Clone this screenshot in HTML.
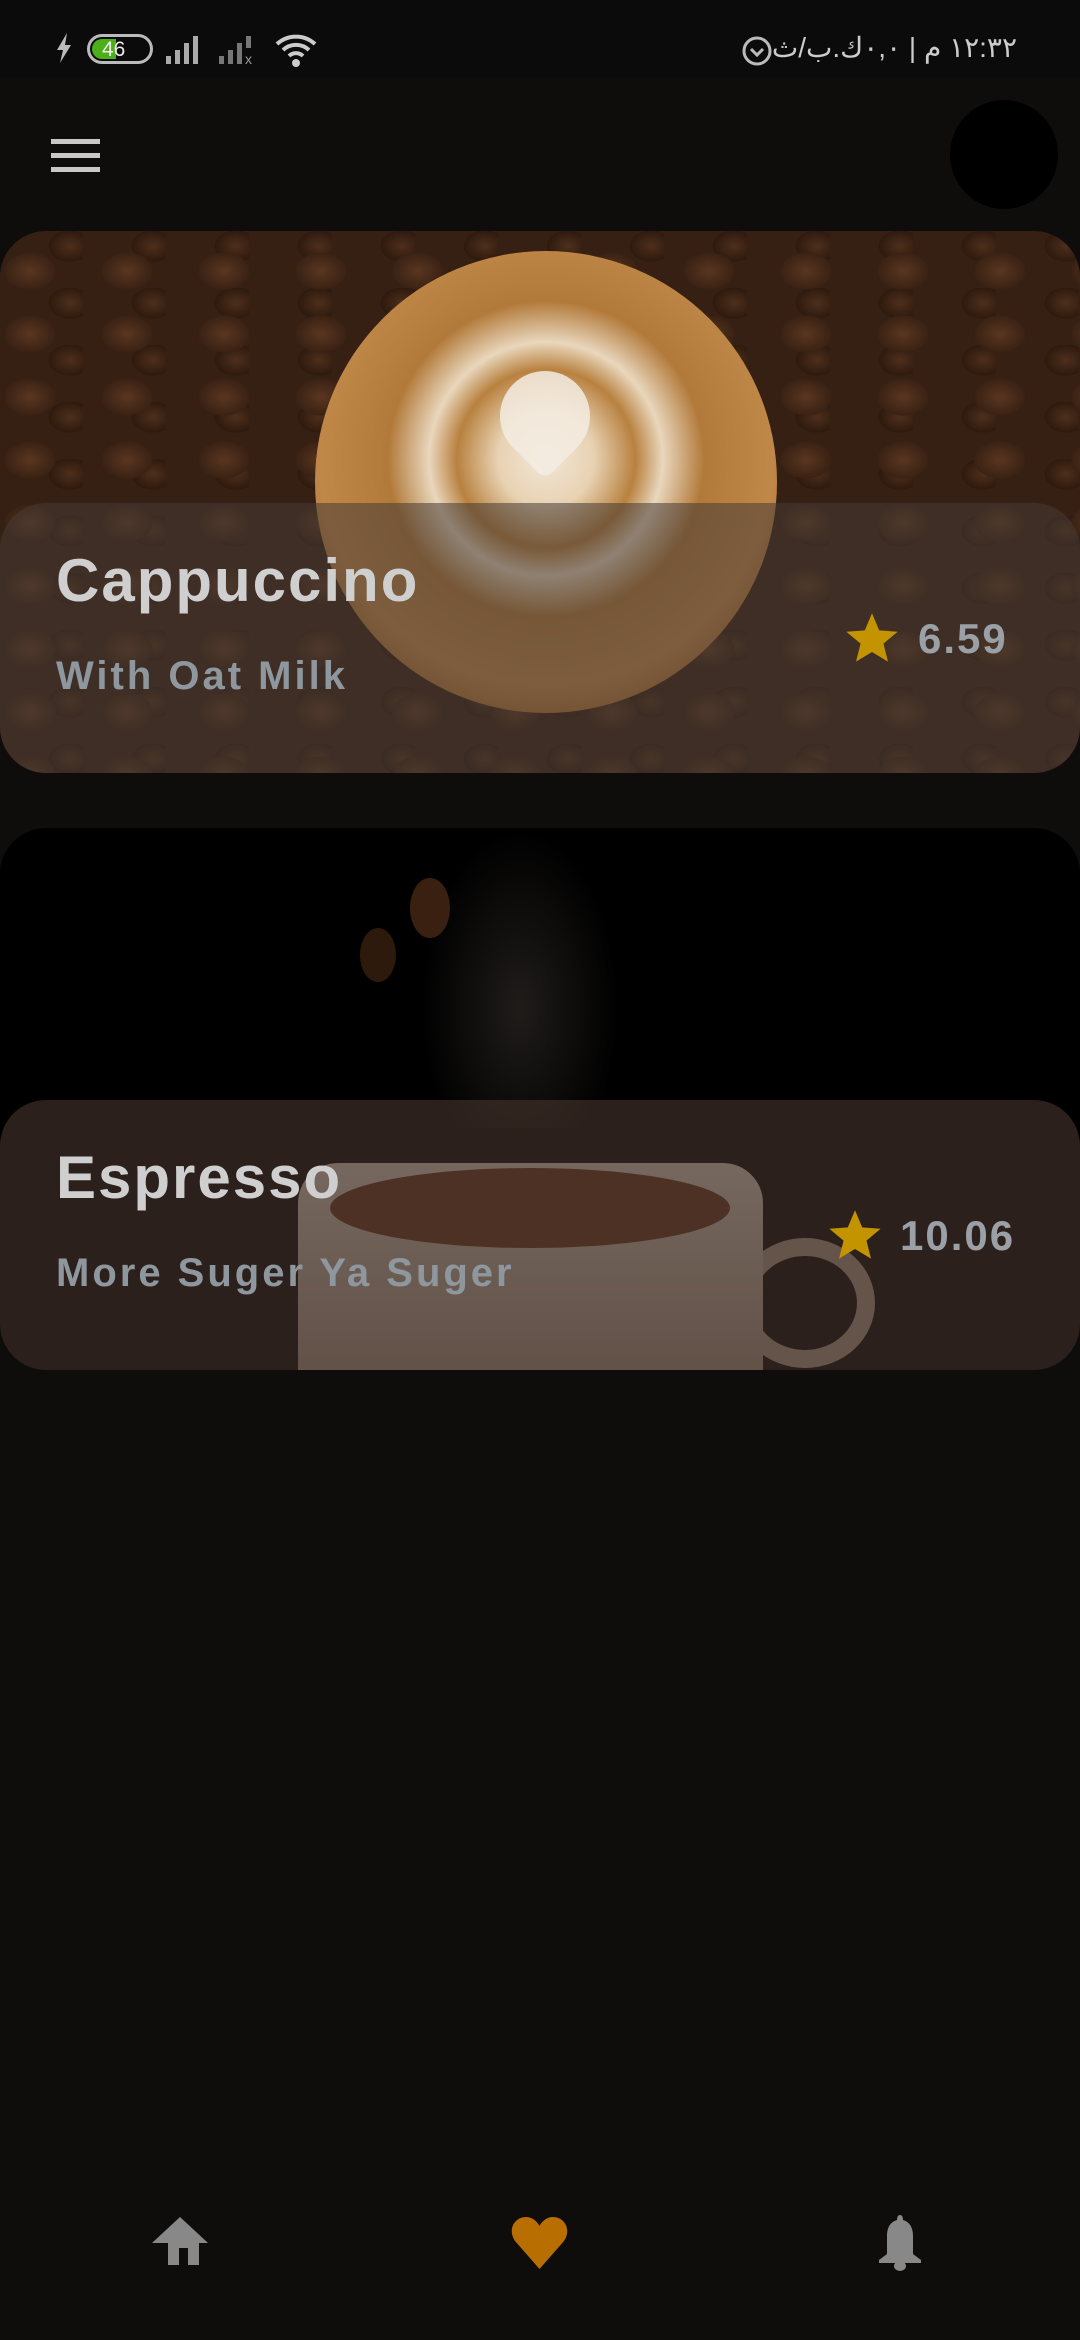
<!DOCTYPE html>
<html><head><meta charset="utf-8"><style>
*{margin:0;padding:0;box-sizing:border-box}
body{width:1080px;height:2340px;background:#0e0d0c;font-family:"Liberation Sans",sans-serif;position:relative;overflow:hidden}
.sb{position:absolute;left:0;top:0;width:1080px;height:79px;background:#0b0b0b}
.card{position:absolute;left:0;width:1080px;height:542px;border-radius:46px;overflow:hidden}
.c1{top:231px;background:
radial-gradient(ellipse 36px 26px at 30px 40px,#5a3620 0,#3a2214 70%,transparent 72%),
radial-gradient(ellipse 30px 22px at 70px 15px,#4e2f1c 0,#2e1a0e 70%,transparent 72%),
#352013;background-size:97px 63px,83px 57px,auto}
.cup{position:absolute;left:315px;top:20px;width:462px;height:462px;border-radius:50%;
background:radial-gradient(circle at 50% 45%,#f2e6d6 0,#e8d2b3 14%,#b8813f 26%,#e9d7bd 34%,#b27a3a 46%,#c08848 66%,#a4682c 80%,#efe8df 83%,#d8d0c8 100%)}
.heart{position:absolute;left:500px;top:140px;width:90px;height:90px;background:#f3ece2;border-radius:45px 45px 10px 45px;transform:rotate(45deg);opacity:.85}
.ov{position:absolute;left:0;top:272px;width:1080px;height:270px;border-radius:46px 46px 0 0}
.o1{background:rgba(70,58,52,.55)}
.c2{top:828px;background:#000}
.cup2{position:absolute;left:298px;top:335px;width:465px;height:230px;border-radius:40px 40px 0 0;background:linear-gradient(#c6bdb2,#8a7c70);}
.cup2in{position:absolute;left:330px;top:340px;width:400px;height:80px;border-radius:50%;background:#5a2e18}
.handle{position:absolute;left:735px;top:410px;width:140px;height:130px;border:18px solid #9a8a7c;border-radius:50%}
.o2{background:rgba(70,52,44,.62)}
.t{position:absolute;left:56px;color:#d0cfcf;font-size:60px;letter-spacing:2px;line-height:1;font-weight:bold}
.s{position:absolute;left:56px;color:#8e979e;font-size:40px;letter-spacing:3px;line-height:1;font-weight:bold}
.p{position:absolute;color:#9aa0a6;font-size:42px;letter-spacing:2px;line-height:1;font-weight:bold}
.star{position:absolute;width:56px;height:54px}
</style></head><body>
<div class="sb">
<svg style="position:absolute;left:55px;top:33px" width="18" height="30" viewBox="0 0 18 30"><path d="M12 0L2 17h6l-3 13 11-18h-6z" fill="#bbb"/></svg>
<div style="position:absolute;left:87px;top:34px;width:66px;height:30px;border:3px solid #bbb;border-radius:15px"><div style="position:absolute;left:2px;top:2px;width:24px;height:20px;background:#4caf1a;border-radius:10px 0 0 10px"></div><span style="position:absolute;left:12px;top:1px;color:#eee;font-size:21px">46</span></div>
<svg style="position:absolute;left:166px;top:34px" width="40" height="30"><rect x="0" y="22" width="5" height="8" fill="#aaa"/><rect x="9" y="16" width="5" height="14" fill="#aaa"/><rect x="18" y="9" width="5" height="21" fill="#aaa"/><rect x="27" y="2" width="5" height="28" fill="#aaa"/></svg>
<svg style="position:absolute;left:219px;top:34px" width="40" height="30"><rect x="0" y="22" width="5" height="8" fill="#777"/><rect x="9" y="16" width="5" height="14" fill="#777"/><rect x="18" y="9" width="5" height="21" fill="#777"/><rect x="27" y="2" width="5" height="12" fill="#777"/><text x="26" y="30" font-size="14" fill="#999">x</text></svg>
<svg style="position:absolute;left:274px;top:32px" width="46" height="36" viewBox="0 0 46 36"><path d="M3 12a28 28 0 0 1 38 0M9 18a19 19 0 0 1 26 0M15 24a10 10 0 0 1 14 0" stroke="#ccc" stroke-width="4" fill="none"/><circle cx="22" cy="31" r="4" fill="#ccc"/></svg>
<svg style="position:absolute;left:740px;top:33px" width="34" height="34" viewBox="0 0 34 34"><circle cx="17" cy="18" r="13" stroke="#bbb" stroke-width="3" fill="none"/><path d="M11 16l6 6 6-6" stroke="#bbb" stroke-width="3" fill="none"/></svg>
<div style="position:absolute;right:63px;top:31px;color:#ccc;font-size:28px;direction:rtl;font-family:'Liberation Sans','Noto Sans CJK SC',sans-serif;white-space:nowrap">١٢:٣٢ م | ٠,٠ك.ب/ث</div>
</div>
<div style="position:absolute;left:51px;top:139px;width:49px;height:5px;background:#c8c8c8"></div>
<div style="position:absolute;left:51px;top:153px;width:49px;height:5px;background:#c8c8c8"></div>
<div style="position:absolute;left:51px;top:167px;width:49px;height:5px;background:#c8c8c8"></div>
<div style="position:absolute;left:950px;top:100px;width:108px;height:109px;border-radius:50%;background:#000"></div>

<div class="card c1">
<div class="cup"></div><div class="heart"></div>
<div class="ov o1"></div>
<div class="t" style="top:320px">Cappuccino</div>
<div class="s" style="top:425px">With Oat Milk</div>
<svg class="star" style="left:844px;top:380px" viewBox="0 0 24 24"><path d="M12 1l3.2 7.6 8.2.6-6.3 5.3 2 8L12 18.2 4.9 22.5l2-8L.6 9.2l8.2-.6z" fill="#c39400"/></svg>
<div class="p" style="left:918px;top:387px">6.59</div>
</div>

<div class="card c2">
<div style="position:absolute;left:420px;top:0;width:200px;height:300px;background:radial-gradient(ellipse at 50% 60%,rgba(90,80,75,.35),transparent 70%)"></div>
<div style="position:absolute;left:410px;top:50px;width:40px;height:60px;border-radius:50%;background:#3a2010"></div>
<div style="position:absolute;left:360px;top:100px;width:36px;height:54px;border-radius:50%;background:#2e1a0c"></div>
<div class="handle"></div><div class="cup2"></div><div class="cup2in"></div>
<div class="ov o2"></div>
<div class="t" style="top:320px">Espresso</div>
<div class="s" style="top:425px">More Suger Ya Suger</div>
<svg class="star" style="left:827px;top:380px" viewBox="0 0 24 24"><path d="M12 1l3.2 7.6 8.2.6-6.3 5.3 2 8L12 18.2 4.9 22.5l2-8L.6 9.2l8.2-.6z" fill="#c39400"/></svg>
<div class="p" style="left:900px;top:387px">10.06</div>
</div>

<svg style="position:absolute;left:152px;top:2217px" width="56" height="48" viewBox="0 0 56 48"><path d="M28 0L56 26H47V48H36V31H27V48H16V26H0Z" fill="#888"/></svg>
<svg style="position:absolute;left:511px;top:2217px" width="57" height="52" viewBox="0 0 57 52"><path d="M28.5 52L4 24C-4 12 4 0 15 0c6 0 11 4 13.5 9C31 4 36 0 42 0c11 0 19 12 11 24z" fill="#b86e00"/></svg>
<svg style="position:absolute;left:877px;top:2215px" width="46" height="56" viewBox="0 0 46 56"><path d="M23 0c2 0 3 2 3 5 7 2 10 8 10 16v18l8 6v3H2v-3l8-6V21c0-8 3-14 10-16 0-3 1-5 3-5z" fill="#888"/><ellipse cx="23" cy="51" rx="6" ry="5" fill="#888"/></svg>
</body></html>
